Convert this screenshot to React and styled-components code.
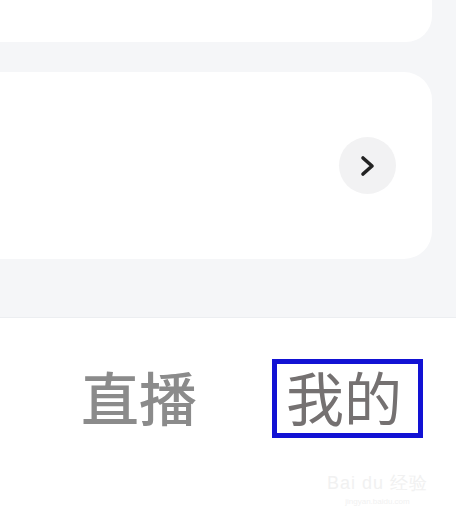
import React from "react";
import styled, { createGlobalStyle } from "styled-components";

const GlobalStyle = createGlobalStyle`
  html, body {
    margin: 0;
    padding: 0;
    background: #ffffff;
    font-family: "Noto Sans CJK SC", "Noto Sans", sans-serif;
  }
`;

const Page = styled.div`
  width: 456px;
  height: 520px;
  overflow: hidden;
  position: relative;
  display: flex;
  flex-direction: column;
`;

const Feed = styled.div`
  background: #f5f6f8;
  display: flex;
  flex-direction: column;
  gap: 30px;
  padding: 0 24px 58px 0;
  border-bottom: 1px solid #eceef1;
`;

const Card = styled.div`
  margin-left: -40px;
  height: ${(p) => p.height}px;
  background: #ffffff;
  border-radius: ${(p) => (p.cut ? "0 0 26px 26px" : "28px")};
  display: flex;
  align-items: center;
  justify-content: flex-end;
  padding-right: 36px;
`;

const MoreButton = styled.button`
  width: 57px;
  height: 57px;
  border-radius: 50%;
  border: none;
  background: #f2f2f3;
  display: flex;
  align-items: center;
  justify-content: center;
  padding: 0;
`;

const TabBar = styled.div`
  flex: 1;
  background: #ffffff;
  display: flex;
  align-items: flex-start;
  padding: 41px 0 0 81px;
  gap: 75px;
`;

const Tab = styled.div`
  font-size: 58px;
  line-height: 1;
  color: ${(p) => p.color};
  font-weight: ${(p) => p.weight || 400};
  padding: ${(p) => (p.active ? "3px 16px 8px 9px" : "8px 0 0 0")};
  border: ${(p) => (p.active ? "5px solid #1212d4" : "none")};
  white-space: nowrap;
`;

const Watermark = styled.div`
  position: absolute;
  right: 28px;
  bottom: 14px;
  color: #f1f1f1;
  text-align: center;
  font-family: "Liberation Sans", sans-serif;
`;

const WmTop = styled.div`
  font-size: 18px;
  letter-spacing: 1px;
`;

const WmBottom = styled.div`
  font-size: 8px;
  margin-top: 2px;
`;

export default function App() {
  return (
    <>
      <GlobalStyle />
      <Page>
        <Feed>
          <Card height={42} cut />
          <Card height={187}>
            <MoreButton>
              <svg width="18" height="26" viewBox="0 0 18 26">
                <path
                  d="M4 5 L13 13 L4 21"
                  fill="none"
                  stroke="#222222"
                  strokeWidth="3.6"
                  strokeLinecap="round"
                  strokeLinejoin="round"
                />
              </svg>
            </MoreButton>
          </Card>
        </Feed>
        <TabBar>
          <Tab color="#8b8b8b" weight={500}>直播</Tab>
          <Tab color="#757171" active>我的</Tab>
        </TabBar>
        <Watermark>
          <WmTop>Bai du 经验</WmTop>
          <WmBottom>jingyan.baidu.com</WmBottom>
        </Watermark>
      </Page>
    </>
  );
}
